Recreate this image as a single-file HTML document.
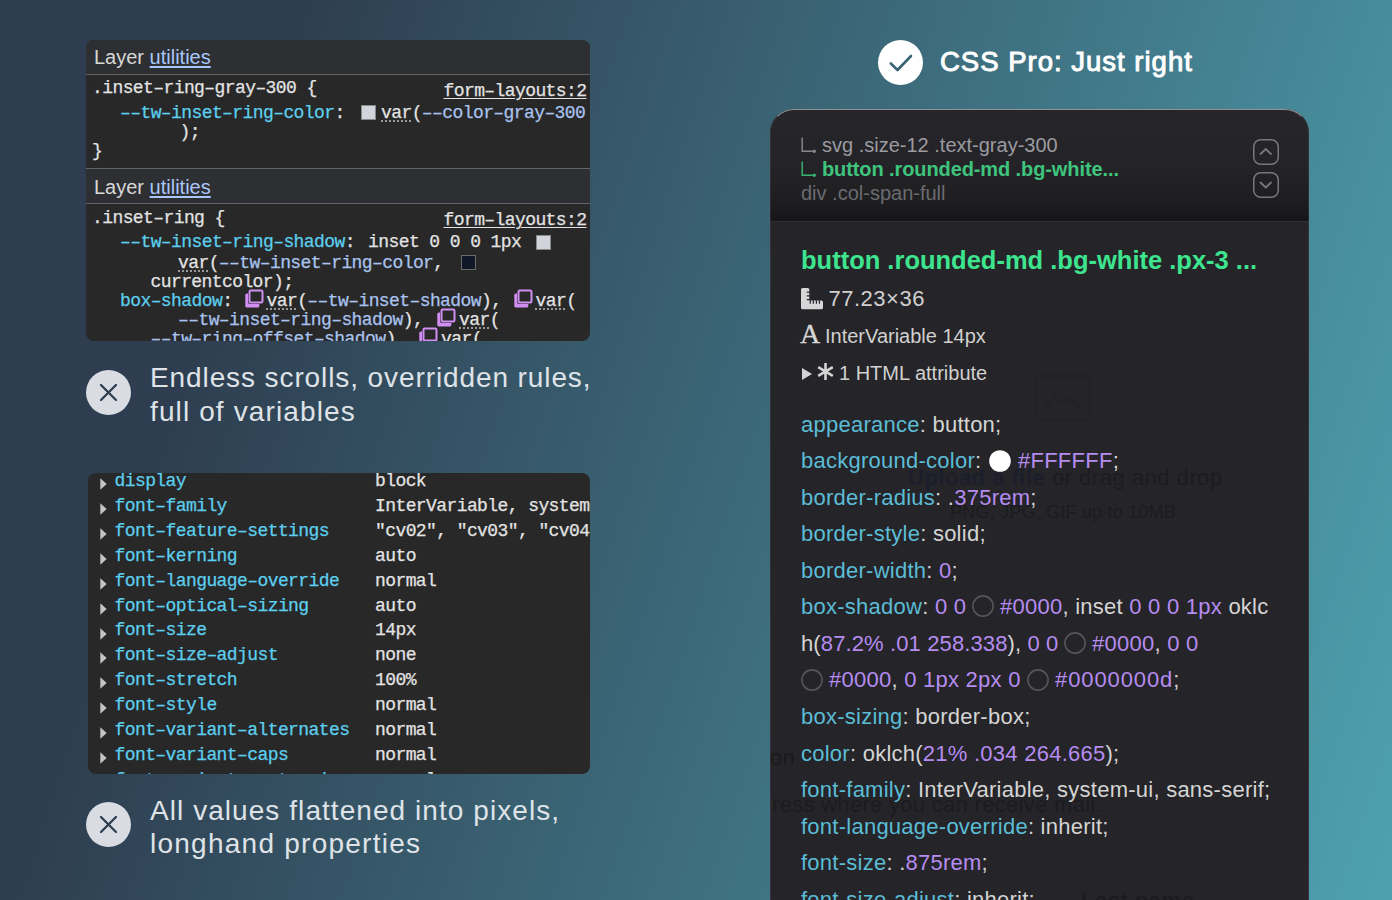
<!DOCTYPE html><html><head><meta charset="utf-8"><style>
html,body{margin:0;padding:0;}
body{width:1392px;height:900px;overflow:hidden;position:relative;
 background:linear-gradient(108deg,#2e3e50 18%,#4ea1b0 100%);}
.t{position:absolute;white-space:pre;}
.abs{position:absolute;}
.panel{position:absolute;overflow:hidden;}
.sw{display:inline-block;vertical-align:top;}
u.dot{text-decoration:underline dotted #9a9a9a;text-decoration-thickness:1.5px;text-underline-offset:3px;}
</style></head><body>

<div class="panel" style="left:86px;top:40px;width:504px;height:300.5px;border-radius:8px;background:#282828;">
<div class="abs" style="left:0;top:0px;width:504px;height:34px;background:#2e2f32;"></div>
<div class="abs" style="left:0;top:129px;width:504px;height:34.5px;background:#2e2f32;"></div>
<div class="abs" style="left:0;top:34px;width:504px;height:1px;background:#636467;"></div>
<div class="abs" style="left:0;top:128px;width:504px;height:1px;background:#636467;"></div>
<div class="abs" style="left:0;top:163px;width:504px;height:1px;background:#636467;"></div>
<div class="t" style="left:8.00px;top:7.07px;font-size:20px;line-height:20px;font-family:'Liberation Sans', sans-serif;letter-spacing:0px;"><span style="color:#d8d8d8">Layer </span><span style="color:#a8c7fa;text-decoration:underline;text-underline-offset:2px;">utilities</span></div>
<div class="t" style="left:8.00px;top:136.57px;font-size:20px;line-height:20px;font-family:'Liberation Sans', sans-serif;letter-spacing:0px;"><span style="color:#d8d8d8">Layer </span><span style="color:#a8c7fa;text-decoration:underline;text-underline-offset:2px;">utilities</span></div>
<div class="t" style="left:6.00px;top:39.10px;font-size:18px;line-height:18px;font-family:'Liberation Mono', monospace;color:#e3e3e3;letter-spacing:-0.59px;-webkit-text-stroke:0.25px currentColor;">.inset–ring–gray–300 {</div>
<div class="t" style="left:357.50px;top:41.80px;font-size:18px;line-height:18px;font-family:'Liberation Mono', monospace;color:#e3e3e3;letter-spacing:-0.59px;-webkit-text-stroke:0.25px currentColor;"><span style="text-decoration:underline;text-underline-offset:2px;">form–layouts:2</span></div>
<div class="t" style="left:34.00px;top:63.70px;font-size:18px;line-height:18px;font-family:'Liberation Mono', monospace;color:#e3e3e3;letter-spacing:-0.59px;-webkit-text-stroke:0.25px currentColor;"><span style="color:#5ccfee">––tw–inset–ring–color</span>: </div>
<div class="abs" style="left:275px;top:65px;width:13px;height:13px;background:#d1d5db;border:1px solid #8a8a8a;"></div>
<div class="t" style="left:295.00px;top:63.70px;font-size:18px;line-height:18px;font-family:'Liberation Mono', monospace;color:#e3e3e3;letter-spacing:-0.59px;-webkit-text-stroke:0.25px currentColor;"><u class="dot">var</u>(<span style="color:#a9c3ee">––color–gray–300</span></div>
<div class="t" style="left:93.50px;top:82.90px;font-size:18px;line-height:18px;font-family:'Liberation Mono', monospace;color:#e3e3e3;letter-spacing:-0.59px;-webkit-text-stroke:0.25px currentColor;">);</div>
<div class="t" style="left:6.00px;top:101.90px;font-size:18px;line-height:18px;font-family:'Liberation Mono', monospace;color:#e3e3e3;letter-spacing:-0.59px;-webkit-text-stroke:0.25px currentColor;">}</div>
<div class="t" style="left:6.00px;top:168.70px;font-size:18px;line-height:18px;font-family:'Liberation Mono', monospace;color:#e3e3e3;letter-spacing:-0.59px;-webkit-text-stroke:0.25px currentColor;">.inset–ring {</div>
<div class="t" style="left:357.50px;top:171.40px;font-size:18px;line-height:18px;font-family:'Liberation Mono', monospace;color:#e3e3e3;letter-spacing:-0.59px;-webkit-text-stroke:0.25px currentColor;"><span style="text-decoration:underline;text-underline-offset:2px;">form–layouts:2</span></div>
<div class="t" style="left:34.00px;top:193.00px;font-size:18px;line-height:18px;font-family:'Liberation Mono', monospace;color:#e3e3e3;letter-spacing:-0.59px;-webkit-text-stroke:0.25px currentColor;"><span style="color:#5ccfee">––tw–inset–ring–shadow</span>:</div>
<div class="t" style="left:282.04px;top:193.00px;font-size:18px;line-height:18px;font-family:'Liberation Mono', monospace;color:#e3e3e3;letter-spacing:-0.59px;-webkit-text-stroke:0.25px currentColor;">inset 0 0 0 1px</div>
<div class="abs" style="left:450px;top:195px;width:13px;height:13px;background:#d1d5db;border:1px solid #8a8a8a;"></div>
<div class="t" style="left:92.00px;top:213.60px;font-size:18px;line-height:18px;font-family:'Liberation Mono', monospace;color:#e3e3e3;letter-spacing:-0.59px;-webkit-text-stroke:0.25px currentColor;"><u class="dot">var</u>(<span style="color:#a9c3ee">––tw–inset–ring–color</span>, </div>
<div class="abs" style="left:375px;top:215px;width:13px;height:13px;background:#101828;border:1px solid #6a6a6a;"></div>
<div class="t" style="left:64.50px;top:233.20px;font-size:18px;line-height:18px;font-family:'Liberation Mono', monospace;color:#e3e3e3;letter-spacing:-0.59px;-webkit-text-stroke:0.25px currentColor;">currentcolor);</div>
<div class="t" style="left:34.00px;top:251.90px;font-size:18px;line-height:18px;font-family:'Liberation Mono', monospace;color:#e3e3e3;letter-spacing:-0.59px;-webkit-text-stroke:0.25px currentColor;"><span style="color:#5ccfee">box–shadow</span>: </div>
<svg class="abs" style="left:159px;top:249px" width="20" height="20" viewBox="0 0 20 20">
<rect x="0.3" y="4.6" width="14" height="14" rx="1.6" fill="#d08ef2"/>
<rect x="3" y="0" width="16" height="15" rx="2" fill="#282828"/>
<rect x="4.5" y="1.5" width="13" height="12" rx="1.2" fill="#282828" stroke="#d08ef2" stroke-width="2"/>
</svg>
<div class="t" style="left:180.50px;top:251.90px;font-size:18px;line-height:18px;font-family:'Liberation Mono', monospace;color:#e3e3e3;letter-spacing:-0.59px;-webkit-text-stroke:0.25px currentColor;"><u class="dot">var</u>(<span style="color:#a9c3ee">––tw–inset–shadow</span>), </div>
<svg class="abs" style="left:427.5px;top:249px" width="20" height="20" viewBox="0 0 20 20">
<rect x="0.3" y="4.6" width="14" height="14" rx="1.6" fill="#d08ef2"/>
<rect x="3" y="0" width="16" height="15" rx="2" fill="#282828"/>
<rect x="4.5" y="1.5" width="13" height="12" rx="1.2" fill="#282828" stroke="#d08ef2" stroke-width="2"/>
</svg>
<div class="t" style="left:449.50px;top:251.90px;font-size:18px;line-height:18px;font-family:'Liberation Mono', monospace;color:#e3e3e3;letter-spacing:-0.59px;-webkit-text-stroke:0.25px currentColor;"><u class="dot">var</u>(</div>
<div class="t" style="left:92.00px;top:270.90px;font-size:18px;line-height:18px;font-family:'Liberation Mono', monospace;color:#e3e3e3;letter-spacing:-0.59px;-webkit-text-stroke:0.25px currentColor;"><span style="color:#a9c3ee">––tw–inset–ring–shadow</span>), </div>
<svg class="abs" style="left:351px;top:268px" width="20" height="20" viewBox="0 0 20 20">
<rect x="0.3" y="4.6" width="14" height="14" rx="1.6" fill="#d08ef2"/>
<rect x="3" y="0" width="16" height="15" rx="2" fill="#282828"/>
<rect x="4.5" y="1.5" width="13" height="12" rx="1.2" fill="#282828" stroke="#d08ef2" stroke-width="2"/>
</svg>
<div class="t" style="left:373.00px;top:270.90px;font-size:18px;line-height:18px;font-family:'Liberation Mono', monospace;color:#e3e3e3;letter-spacing:-0.59px;-webkit-text-stroke:0.25px currentColor;"><u class="dot">var</u>(</div>
<div class="t" style="left:64.50px;top:289.90px;font-size:18px;line-height:18px;font-family:'Liberation Mono', monospace;color:#e3e3e3;letter-spacing:-0.59px;-webkit-text-stroke:0.25px currentColor;"><span style="color:#a9c3ee">––tw–ring–offset–shadow</span>), </div>
<svg class="abs" style="left:333px;top:287px" width="20" height="20" viewBox="0 0 20 20">
<rect x="0.3" y="4.6" width="14" height="14" rx="1.6" fill="#d08ef2"/>
<rect x="3" y="0" width="16" height="15" rx="2" fill="#282828"/>
<rect x="4.5" y="1.5" width="13" height="12" rx="1.2" fill="#282828" stroke="#d08ef2" stroke-width="2"/>
</svg>
<div class="t" style="left:355.00px;top:289.90px;font-size:18px;line-height:18px;font-family:'Liberation Mono', monospace;color:#e3e3e3;letter-spacing:-0.59px;-webkit-text-stroke:0.25px currentColor;"><u class="dot">var</u>(</div>
</div>
<svg class="abs" style="left:86.0px;top:369.5px" width="45" height="45" viewBox="0 0 45 45">
<circle cx="22.5" cy="22.5" r="22.5" fill="#d9dde3"/>
<path d="M15 15 L30 30 M30 15 L15 30" stroke="#2e3e50" stroke-width="2.3" stroke-linecap="round"/>
</svg>
<div class="t" style="left:150.00px;top:364.30px;font-size:28px;line-height:28px;font-family:'Liberation Sans', sans-serif;color:#dfe3e8;letter-spacing:0.9px;">Endless scrolls, overridden rules,</div>
<div class="t" style="left:150.00px;top:398.30px;font-size:28px;line-height:28px;font-family:'Liberation Sans', sans-serif;color:#dfe3e8;letter-spacing:1.12px;">full of variables</div>
<svg class="abs" style="left:86.0px;top:801.5px" width="45" height="45" viewBox="0 0 45 45">
<circle cx="22.5" cy="22.5" r="22.5" fill="#d9dde3"/>
<path d="M15 15 L30 30 M30 15 L15 30" stroke="#2e3e50" stroke-width="2.3" stroke-linecap="round"/>
</svg>
<div class="t" style="left:150.00px;top:796.80px;font-size:28px;line-height:28px;font-family:'Liberation Sans', sans-serif;color:#dfe3e8;letter-spacing:1.06px;">All values flattened into pixels,</div>
<div class="t" style="left:150.00px;top:830.30px;font-size:28px;line-height:28px;font-family:'Liberation Sans', sans-serif;color:#dfe3e8;letter-spacing:1.25px;">longhand properties</div>
<div class="panel" style="left:88px;top:473px;width:502px;height:300.5px;border-radius:8px;background:#282828;">
<svg class="abs" style="left:12px;top:5.399999999999977px" width="7" height="12" viewBox="0 0 7 12"><path d="M0.3 0.3 L6.7 6 L0.3 11.7 Z" fill="#c4c4c4"/></svg>
<div class="t" style="left:26.50px;top:-0.80px;font-size:18px;line-height:18px;font-family:'Liberation Mono', monospace;color:#5ccfee;letter-spacing:-0.59px;-webkit-text-stroke:0.25px currentColor;">display</div>
<div class="t" style="left:287.00px;top:-0.80px;font-size:18px;line-height:18px;font-family:'Liberation Mono', monospace;color:#e3e3e3;letter-spacing:-0.59px;-webkit-text-stroke:0.25px currentColor;">block</div>
<svg class="abs" style="left:12px;top:30.25999999999999px" width="7" height="12" viewBox="0 0 7 12"><path d="M0.3 0.3 L6.7 6 L0.3 11.7 Z" fill="#c4c4c4"/></svg>
<div class="t" style="left:26.50px;top:24.06px;font-size:18px;line-height:18px;font-family:'Liberation Mono', monospace;color:#5ccfee;letter-spacing:-0.59px;-webkit-text-stroke:0.25px currentColor;">font–family</div>
<div class="t" style="left:287.00px;top:24.06px;font-size:18px;line-height:18px;font-family:'Liberation Mono', monospace;color:#e3e3e3;letter-spacing:-0.59px;-webkit-text-stroke:0.25px currentColor;">InterVariable, system–ui, sans–serif</div>
<svg class="abs" style="left:12px;top:55.120000000000005px" width="7" height="12" viewBox="0 0 7 12"><path d="M0.3 0.3 L6.7 6 L0.3 11.7 Z" fill="#c4c4c4"/></svg>
<div class="t" style="left:26.50px;top:48.92px;font-size:18px;line-height:18px;font-family:'Liberation Mono', monospace;color:#5ccfee;letter-spacing:-0.59px;-webkit-text-stroke:0.25px currentColor;">font–feature–settings</div>
<div class="t" style="left:287.00px;top:48.92px;font-size:18px;line-height:18px;font-family:'Liberation Mono', monospace;color:#e3e3e3;letter-spacing:-0.59px;-webkit-text-stroke:0.25px currentColor;">&quot;cv02&quot;, &quot;cv03&quot;, &quot;cv04&quot;, &quot;cv11&quot;</div>
<svg class="abs" style="left:12px;top:79.98000000000002px" width="7" height="12" viewBox="0 0 7 12"><path d="M0.3 0.3 L6.7 6 L0.3 11.7 Z" fill="#c4c4c4"/></svg>
<div class="t" style="left:26.50px;top:73.78px;font-size:18px;line-height:18px;font-family:'Liberation Mono', monospace;color:#5ccfee;letter-spacing:-0.59px;-webkit-text-stroke:0.25px currentColor;">font–kerning</div>
<div class="t" style="left:287.00px;top:73.78px;font-size:18px;line-height:18px;font-family:'Liberation Mono', monospace;color:#e3e3e3;letter-spacing:-0.59px;-webkit-text-stroke:0.25px currentColor;">auto</div>
<svg class="abs" style="left:12px;top:104.84000000000003px" width="7" height="12" viewBox="0 0 7 12"><path d="M0.3 0.3 L6.7 6 L0.3 11.7 Z" fill="#c4c4c4"/></svg>
<div class="t" style="left:26.50px;top:98.64px;font-size:18px;line-height:18px;font-family:'Liberation Mono', monospace;color:#5ccfee;letter-spacing:-0.59px;-webkit-text-stroke:0.25px currentColor;">font–language–override</div>
<div class="t" style="left:287.00px;top:98.64px;font-size:18px;line-height:18px;font-family:'Liberation Mono', monospace;color:#e3e3e3;letter-spacing:-0.59px;-webkit-text-stroke:0.25px currentColor;">normal</div>
<svg class="abs" style="left:12px;top:129.69999999999993px" width="7" height="12" viewBox="0 0 7 12"><path d="M0.3 0.3 L6.7 6 L0.3 11.7 Z" fill="#c4c4c4"/></svg>
<div class="t" style="left:26.50px;top:123.50px;font-size:18px;line-height:18px;font-family:'Liberation Mono', monospace;color:#5ccfee;letter-spacing:-0.59px;-webkit-text-stroke:0.25px currentColor;">font–optical–sizing</div>
<div class="t" style="left:287.00px;top:123.50px;font-size:18px;line-height:18px;font-family:'Liberation Mono', monospace;color:#e3e3e3;letter-spacing:-0.59px;-webkit-text-stroke:0.25px currentColor;">auto</div>
<svg class="abs" style="left:12px;top:154.55999999999995px" width="7" height="12" viewBox="0 0 7 12"><path d="M0.3 0.3 L6.7 6 L0.3 11.7 Z" fill="#c4c4c4"/></svg>
<div class="t" style="left:26.50px;top:148.36px;font-size:18px;line-height:18px;font-family:'Liberation Mono', monospace;color:#5ccfee;letter-spacing:-0.59px;-webkit-text-stroke:0.25px currentColor;">font–size</div>
<div class="t" style="left:287.00px;top:148.36px;font-size:18px;line-height:18px;font-family:'Liberation Mono', monospace;color:#e3e3e3;letter-spacing:-0.59px;-webkit-text-stroke:0.25px currentColor;">14px</div>
<svg class="abs" style="left:12px;top:179.41999999999996px" width="7" height="12" viewBox="0 0 7 12"><path d="M0.3 0.3 L6.7 6 L0.3 11.7 Z" fill="#c4c4c4"/></svg>
<div class="t" style="left:26.50px;top:173.22px;font-size:18px;line-height:18px;font-family:'Liberation Mono', monospace;color:#5ccfee;letter-spacing:-0.59px;-webkit-text-stroke:0.25px currentColor;">font–size–adjust</div>
<div class="t" style="left:287.00px;top:173.22px;font-size:18px;line-height:18px;font-family:'Liberation Mono', monospace;color:#e3e3e3;letter-spacing:-0.59px;-webkit-text-stroke:0.25px currentColor;">none</div>
<svg class="abs" style="left:12px;top:204.27999999999997px" width="7" height="12" viewBox="0 0 7 12"><path d="M0.3 0.3 L6.7 6 L0.3 11.7 Z" fill="#c4c4c4"/></svg>
<div class="t" style="left:26.50px;top:198.08px;font-size:18px;line-height:18px;font-family:'Liberation Mono', monospace;color:#5ccfee;letter-spacing:-0.59px;-webkit-text-stroke:0.25px currentColor;">font–stretch</div>
<div class="t" style="left:287.00px;top:198.08px;font-size:18px;line-height:18px;font-family:'Liberation Mono', monospace;color:#e3e3e3;letter-spacing:-0.59px;-webkit-text-stroke:0.25px currentColor;">100%</div>
<svg class="abs" style="left:12px;top:229.14px" width="7" height="12" viewBox="0 0 7 12"><path d="M0.3 0.3 L6.7 6 L0.3 11.7 Z" fill="#c4c4c4"/></svg>
<div class="t" style="left:26.50px;top:222.94px;font-size:18px;line-height:18px;font-family:'Liberation Mono', monospace;color:#5ccfee;letter-spacing:-0.59px;-webkit-text-stroke:0.25px currentColor;">font–style</div>
<div class="t" style="left:287.00px;top:222.94px;font-size:18px;line-height:18px;font-family:'Liberation Mono', monospace;color:#e3e3e3;letter-spacing:-0.59px;-webkit-text-stroke:0.25px currentColor;">normal</div>
<svg class="abs" style="left:12px;top:254.0px" width="7" height="12" viewBox="0 0 7 12"><path d="M0.3 0.3 L6.7 6 L0.3 11.7 Z" fill="#c4c4c4"/></svg>
<div class="t" style="left:26.50px;top:247.80px;font-size:18px;line-height:18px;font-family:'Liberation Mono', monospace;color:#5ccfee;letter-spacing:-0.59px;-webkit-text-stroke:0.25px currentColor;">font–variant–alternates</div>
<div class="t" style="left:287.00px;top:247.80px;font-size:18px;line-height:18px;font-family:'Liberation Mono', monospace;color:#e3e3e3;letter-spacing:-0.59px;-webkit-text-stroke:0.25px currentColor;">normal</div>
<svg class="abs" style="left:12px;top:278.86px" width="7" height="12" viewBox="0 0 7 12"><path d="M0.3 0.3 L6.7 6 L0.3 11.7 Z" fill="#c4c4c4"/></svg>
<div class="t" style="left:26.50px;top:272.66px;font-size:18px;line-height:18px;font-family:'Liberation Mono', monospace;color:#5ccfee;letter-spacing:-0.59px;-webkit-text-stroke:0.25px currentColor;">font–variant–caps</div>
<div class="t" style="left:287.00px;top:272.66px;font-size:18px;line-height:18px;font-family:'Liberation Mono', monospace;color:#e3e3e3;letter-spacing:-0.59px;-webkit-text-stroke:0.25px currentColor;">normal</div>
<svg class="abs" style="left:12px;top:303.7199999999999px" width="7" height="12" viewBox="0 0 7 12"><path d="M0.3 0.3 L6.7 6 L0.3 11.7 Z" fill="#c4c4c4"/></svg>
<div class="t" style="left:26.50px;top:297.52px;font-size:18px;line-height:18px;font-family:'Liberation Mono', monospace;color:#5ccfee;letter-spacing:-0.59px;-webkit-text-stroke:0.25px currentColor;">font–variant–east–asian</div>
<div class="t" style="left:287.00px;top:297.52px;font-size:18px;line-height:18px;font-family:'Liberation Mono', monospace;color:#e3e3e3;letter-spacing:-0.59px;-webkit-text-stroke:0.25px currentColor;">normal</div>
</div>
<svg class="abs" style="left:877.5px;top:39.5px" width="45" height="45" viewBox="0 0 45 45">
<circle cx="22.5" cy="22.5" r="22.5" fill="#ffffff"/>
<path d="M12.8 23.5 L19.5 30 L33 16" stroke="#3b6474" stroke-width="2.6" fill="none" stroke-linecap="round" stroke-linejoin="round"/>
</svg>
<div class="t" style="left:940.00px;top:48.22px;font-size:27.5px;line-height:27.5px;font-family:'Liberation Sans', sans-serif;color:#ffffff;letter-spacing:1.0px;-webkit-text-stroke:0.95px #ffffff;">CSS Pro: Just right</div>
<div class="panel" style="left:770px;top:108.5px;width:539px;height:820px;border-radius:24px;background:#252428;">
<div class="abs" style="left:0;top:0;width:539px;height:112px;background:linear-gradient(180deg,#262529 0%,#242327 50%,#1f1f21 78%,#161618 100%);border-bottom:1px solid #2e2e31;"></div>
<svg class="abs" style="left:31px;top:28.5px" width="16" height="17" viewBox="0 0 16 17"><path d="M1.2 0.5 V14.2 H11.5" stroke="#8a8a8e" stroke-width="1.4" fill="none"/><circle cx="13.2" cy="14.2" r="1.7" fill="#8a8a8e"/></svg>
<div class="t" style="left:52.00px;top:26.57px;font-size:20px;line-height:20px;font-family:'Liberation Sans', sans-serif;color:#9b9ba0;">svg .size-12 .text-gray-300</div>
<svg class="abs" style="left:31px;top:52.5px" width="16" height="17" viewBox="0 0 16 17"><path d="M1.2 0.5 V14.2 H11.5" stroke="#38b872" stroke-width="1.4" fill="none"/><circle cx="13.2" cy="14.2" r="1.7" fill="#38b872"/></svg>
<div class="t" style="left:52.00px;top:50.57px;font-size:20px;line-height:20px;font-family:'Liberation Sans', sans-serif;color:#3fc47e;font-weight:bold;letter-spacing:-0.1px;">button .rounded-md .bg-white...</div>
<div class="t" style="left:31.00px;top:74.57px;font-size:20px;line-height:20px;font-family:'Liberation Sans', sans-serif;color:#6b6b70;">div .col-span-full</div>
<svg class="abs" style="left:482.5px;top:30.5px" width="26" height="26" viewBox="0 0 26 26"><rect x="0.75" y="0.75" width="24.5" height="24.5" rx="7" fill="none" stroke="#77777c" stroke-width="1.5"/><path d="M7.5 15 L12.75 10 L18 15" stroke="#77777c" stroke-width="1.8" fill="none" stroke-linecap="round" stroke-linejoin="round"/></svg>
<svg class="abs" style="left:482.5px;top:63.80000000000001px" width="26" height="26" viewBox="0 0 26 26"><rect x="0.75" y="0.75" width="24.5" height="24.5" rx="7" fill="none" stroke="#77777c" stroke-width="1.5"/><path d="M7.5 10.5 L12.75 15.5 L18 10.5" stroke="#77777c" stroke-width="1.8" fill="none" stroke-linecap="round" stroke-linejoin="round"/></svg>
<div class="t" style="left:31.00px;top:139.91px;font-size:25.5px;line-height:25.5px;font-family:'Liberation Sans', sans-serif;color:#3ee58f;font-weight:bold;">button .rounded-md .bg-white .px-3 ...</div>
<svg class="abs" style="left:31px;top:179.5px" width="22" height="22" viewBox="0 0 22 22">
<path d="M1.5 0 H6.8 Q8.3 0 8.3 1.5 V12.6 H20.5 Q22 12.6 22 14.1 V19.8 Q22 21.3 20.5 21.3 H1.5 Q0 21.3 0 19.8 V1.5 Q0 0 1.5 0 Z" fill="#d6d6d6"/>
<path d="M8.8 4.2 H5.8 M8.8 7.9 H5.8 M8.8 11.6 H5.8 M9.3 12.3 V15.8 M12.3 12.3 V15.8 M15.4 12.3 V15.8 M18.4 12.3 V15.8" stroke="#252429" stroke-width="1.2"/>
</svg>
<div class="t" style="left:58.50px;top:179.38px;font-size:22px;line-height:22px;font-family:'Liberation Sans', sans-serif;color:#d0d0d0;letter-spacing:0.5px;">77.23×36</div>
<div class="t" style="left:30.00px;top:211.80px;font-size:28px;line-height:28px;font-family:'Liberation Sans', sans-serif;color:#d6d6d6;font-family:'Liberation Serif', serif;-webkit-text-stroke:0.35px #d6d6d6;">A</div>
<div class="t" style="left:55.00px;top:217.57px;font-size:20px;line-height:20px;font-family:'Liberation Sans', sans-serif;color:#d0d0d0;">InterVariable 14px</div>
<svg class="abs" style="left:31px;top:258.5px" width="12" height="14" viewBox="0 0 12 14"><path d="M1 1 L11 7 L1 13 Z" fill="#d4d4d4"/></svg>
<svg class="abs" style="left:46px;top:253.5px" width="19" height="19" viewBox="0 0 19 19">
<path d="M9.5 1 V18 M2.2 5.2 L16.8 13.8 M16.8 5.2 L2.2 13.8" stroke="#d4d4d4" stroke-width="2.6" fill="none"/></svg>
<div class="t" style="left:69.00px;top:254.57px;font-size:20px;line-height:20px;font-family:'Liberation Sans', sans-serif;color:#d0d0d0;">1 HTML attribute</div>
<svg class="abs" style="left:261px;top:263.5px" width="62" height="52" viewBox="0 0 62 52"><rect x="4" y="4" width="54" height="44" rx="5" fill="none" stroke="#232226" stroke-width="4"/><path d="M12 38 L24 24 L32 32 L40 26 L50 38" stroke="#232226" stroke-width="4" fill="none"/></svg>
<div class="t" style="left:138.00px;top:358.88px;font-size:22px;line-height:22px;font-family:'Liberation Sans', sans-serif;color:#1c1c20;letter-spacing:0.5px;"><span style="color:#1c1e2b;font-weight:bold">Upload a file</span> or drag and drop</div>
<div class="t" style="left:180.00px;top:394.26px;font-size:18px;line-height:18px;font-family:'Liberation Sans', sans-serif;color:#1c1c20;letter-spacing:0.2px;">PNG, JPG, GIF up to 10MB</div>
<div class="t" style="left:0.00px;top:638.88px;font-size:22px;line-height:22px;font-family:'Liberation Sans', sans-serif;color:#1a1a1e;letter-spacing:0.2px;">on</div>
<div class="t" style="left:2.00px;top:685.88px;font-size:22px;line-height:22px;font-family:'Liberation Sans', sans-serif;color:#1c1c20;letter-spacing:0.3px;">ress where you can receive mail.</div>
<div class="t" style="left:311.00px;top:781.88px;font-size:22px;line-height:22px;font-family:'Liberation Sans', sans-serif;color:#1c1c20;font-weight:bold;letter-spacing:0.5px;">Last name</div>
<div class="t" style="left:31.00px;top:305.08px;font-size:22px;line-height:22px;font-family:'Liberation Sans', sans-serif;color:#d4d4d4;letter-spacing:0.25px;"><span style="color:#5bbcd6">appearance</span>: button;</div>
<div class="t" style="left:31.00px;top:341.63px;font-size:22px;line-height:22px;font-family:'Liberation Sans', sans-serif;color:#d4d4d4;letter-spacing:0.25px;"><span style="color:#5bbcd6">background-color</span>: </div>
<svg class="abs" style="left:219px;top:341.5px" width="22" height="22" viewBox="0 0 22 22"><circle cx="11" cy="11" r="10.8" fill="#ffffff"/></svg>
<div class="t" style="left:248.00px;top:341.63px;font-size:22px;line-height:22px;font-family:'Liberation Sans', sans-serif;color:#d4d4d4;letter-spacing:0.25px;"><span style="color:#b58cf0">#FFFFFF</span>;</div>
<div class="t" style="left:31.00px;top:378.18px;font-size:22px;line-height:22px;font-family:'Liberation Sans', sans-serif;color:#d4d4d4;letter-spacing:0.25px;"><span style="color:#5bbcd6">border-radius</span>: .<span style="color:#b58cf0">375rem</span>;</div>
<div class="t" style="left:31.00px;top:414.73px;font-size:22px;line-height:22px;font-family:'Liberation Sans', sans-serif;color:#d4d4d4;letter-spacing:0.25px;"><span style="color:#5bbcd6">border-style</span>: solid;</div>
<div class="t" style="left:31.00px;top:451.28px;font-size:22px;line-height:22px;font-family:'Liberation Sans', sans-serif;color:#d4d4d4;letter-spacing:0.25px;"><span style="color:#5bbcd6">border-width</span>: <span style="color:#b58cf0">0</span>;</div>
<div class="t" style="left:31.00px;top:487.83px;font-size:22px;line-height:22px;font-family:'Liberation Sans', sans-serif;color:#d4d4d4;letter-spacing:0.25px;"><span style="color:#5bbcd6">box-shadow</span>: <span style="color:#b58cf0">0 0</span></div>
<svg class="abs" style="left:202px;top:486.95000000000005px" width="22" height="22" viewBox="0 0 22 22"><circle cx="11" cy="11" r="10.1" fill="#252428" stroke="#56565a" stroke-width="1.6"/></svg>
<div class="t" style="left:230.00px;top:487.83px;font-size:22px;line-height:22px;font-family:'Liberation Sans', sans-serif;color:#d4d4d4;letter-spacing:0.25px;"><span style="color:#b58cf0">#0000</span>, inset <span style="color:#b58cf0">0 0 0 1px</span> oklc</div>
<div class="t" style="left:31.00px;top:524.38px;font-size:22px;line-height:22px;font-family:'Liberation Sans', sans-serif;color:#d4d4d4;letter-spacing:0.12px;">h(<span style="color:#b58cf0">87.2% .01 258.338</span>), <span style="color:#b58cf0">0 0</span></div>
<svg class="abs" style="left:294px;top:523.5px" width="22" height="22" viewBox="0 0 22 22"><circle cx="11" cy="11" r="10.1" fill="#252428" stroke="#56565a" stroke-width="1.6"/></svg>
<div class="t" style="left:322.00px;top:524.38px;font-size:22px;line-height:22px;font-family:'Liberation Sans', sans-serif;color:#d4d4d4;letter-spacing:0.25px;"><span style="color:#b58cf0">#0000</span>, <span style="color:#b58cf0">0 0</span></div>
<svg class="abs" style="left:31px;top:560.05px" width="22" height="22" viewBox="0 0 22 22"><circle cx="11" cy="11" r="10.1" fill="#252428" stroke="#56565a" stroke-width="1.6"/></svg>
<div class="t" style="left:59.00px;top:560.93px;font-size:22px;line-height:22px;font-family:'Liberation Sans', sans-serif;color:#d4d4d4;letter-spacing:0.25px;"><span style="color:#b58cf0">#0000</span>, <span style="color:#b58cf0">0 1px 2px 0</span></div>
<svg class="abs" style="left:257px;top:560.05px" width="22" height="22" viewBox="0 0 22 22"><circle cx="11" cy="11" r="10.1" fill="#252428" stroke="#56565a" stroke-width="1.6"/></svg>
<div class="t" style="left:285.00px;top:560.93px;font-size:22px;line-height:22px;font-family:'Liberation Sans', sans-serif;color:#d4d4d4;letter-spacing:0.9px;"><span style="color:#b58cf0">#0000000d</span>;</div>
<div class="t" style="left:31.00px;top:597.48px;font-size:22px;line-height:22px;font-family:'Liberation Sans', sans-serif;color:#d4d4d4;letter-spacing:0.25px;"><span style="color:#5bbcd6">box-sizing</span>: border-box;</div>
<div class="t" style="left:31.00px;top:634.03px;font-size:22px;line-height:22px;font-family:'Liberation Sans', sans-serif;color:#d4d4d4;letter-spacing:0.25px;"><span style="color:#5bbcd6">color</span>: oklch(<span style="color:#b58cf0">21% .034 264.665</span>);</div>
<div class="t" style="left:31.00px;top:670.58px;font-size:22px;line-height:22px;font-family:'Liberation Sans', sans-serif;color:#d4d4d4;letter-spacing:0.25px;"><span style="color:#5bbcd6">font-family</span>: InterVariable, system-ui, sans-serif;</div>
<div class="t" style="left:31.00px;top:707.13px;font-size:22px;line-height:22px;font-family:'Liberation Sans', sans-serif;color:#d4d4d4;letter-spacing:0.25px;"><span style="color:#5bbcd6">font-language-override</span>: inherit;</div>
<div class="t" style="left:31.00px;top:743.68px;font-size:22px;line-height:22px;font-family:'Liberation Sans', sans-serif;color:#d4d4d4;letter-spacing:0.25px;"><span style="color:#5bbcd6">font-size</span>: .<span style="color:#b58cf0">875rem</span>;</div>
<div class="t" style="left:31.00px;top:780.23px;font-size:22px;line-height:22px;font-family:'Liberation Sans', sans-serif;color:#d4d4d4;letter-spacing:0.25px;"><span style="color:#5bbcd6">font-size-adjust</span>: inherit;</div>
</div>
<div class="abs" style="left:770px;top:108.5px;width:537px;height:820px;border-radius:24px;border:1px solid rgba(255,255,255,0.07);border-top-color:rgba(255,255,255,0.5);pointer-events:none;"></div>
</body></html>
